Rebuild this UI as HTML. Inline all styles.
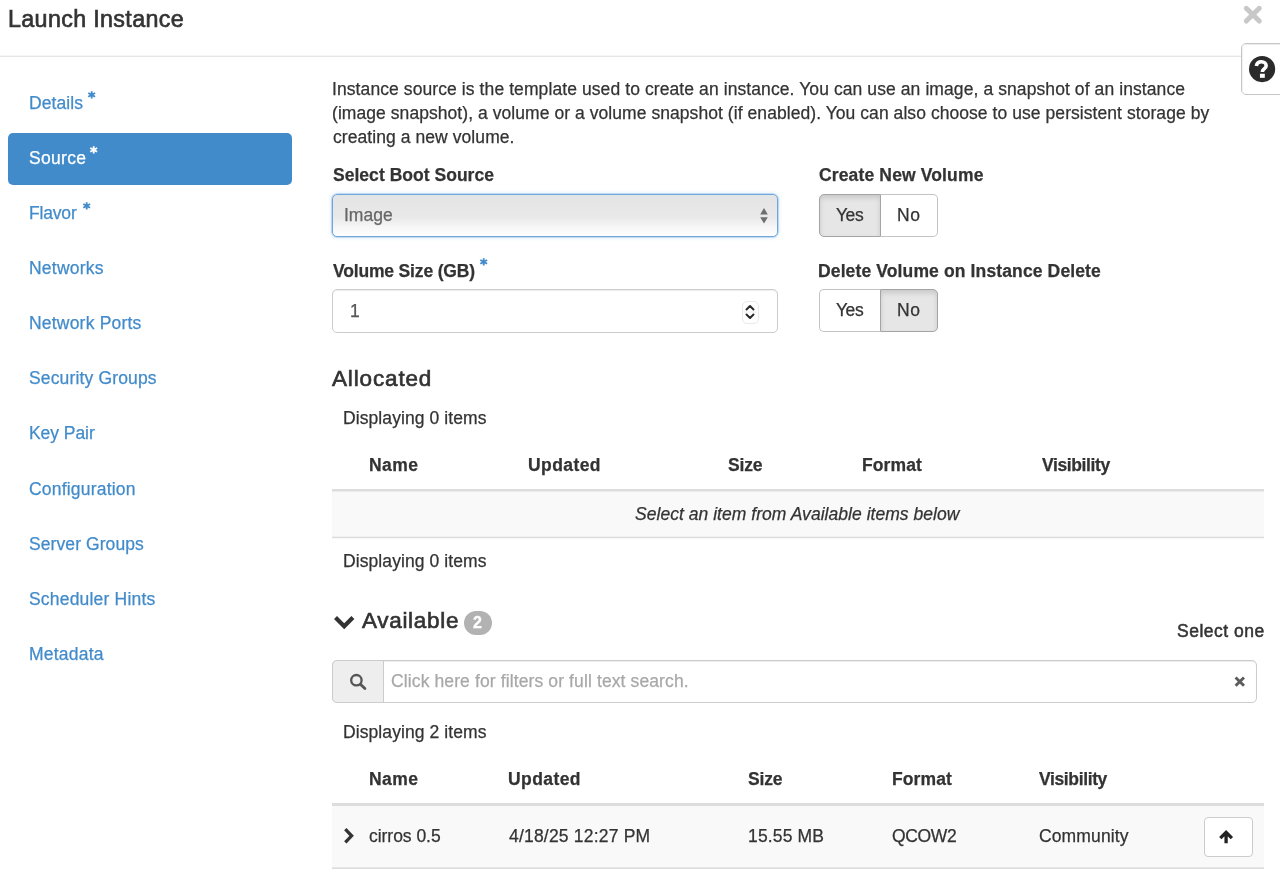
<!DOCTYPE html>
<html>
<head>
<meta charset="utf-8">
<title>Launch Instance</title>
<style>
*{box-sizing:border-box;margin:0;padding:0}
html,body{width:1280px;height:873px;overflow:hidden;background:#fff}
body{font-family:"Liberation Sans",sans-serif;font-size:17.5px;line-height:24.5px;color:#333;position:relative}
.a{position:absolute}
.t{position:absolute;white-space:nowrap;height:24.5px;line-height:24.5px}
.b{font-weight:bold}
.i{font-style:italic}
.lnk{color:#428bca}
.h{font-size:22.5px;height:30px;line-height:30px}
.h1{font-size:23.3px}
svg{display:block;position:absolute;overflow:visible}
.btn{position:absolute;border:1px solid #c3c3c3;background:#fff}
.btn.act{background:#e6e6e6;border-color:#a4a4a4;box-shadow:inset 0 3px 5px rgba(0,0,0,.125)}
.t{-webkit-text-stroke:0.25px;will-change:transform}.h{-webkit-text-stroke:0.65px}.so{-webkit-text-stroke:0.5px}

</style>
</head>
<body>
<!-- ===== modal header ===== -->
<div class="a" style="left:0;top:55px;width:1280px;height:2px;background:linear-gradient(#f5f5f5 50%,#e6e6e6 50%)"></div>
<svg style="left:1244.3px;top:6.2px" width="17.6" height="17.4" viewBox="0 0 17.6 17.4"><path d="M2.3 2.3L15.3 15.1M15.3 2.3L2.3 15.1" stroke="#c8c8c8" stroke-width="5" stroke-linecap="round" fill="none"/></svg>

<!-- help button -->
<div class="a" style="left:1241px;top:43px;width:60px;height:52px;background:#fff;border:1px solid #c6c6c6;border-radius:5px"></div>
<div class="a" style="left:1242px;top:44px;width:58px;height:50px;border-top:1px solid #ececec;border-left:1px solid #f1f1f1;border-radius:4px"></div>
<svg style="left:1249px;top:55.8px" width="26.2" height="26.2" viewBox="0 0 27 27"><circle cx="13.5" cy="13.5" r="13.5" fill="#2b2b2b"/><path d="M7.6 10.2C8 7.4 10 5.9 12.8 5.9C15.6 5.9 17.7 7.6 17.7 10C17.7 12.9 14.1 13.4 13.9 15.6L13.9 16.6" stroke="#fff" stroke-width="3.7" fill="none"/><rect x="11.3" y="18.3" width="5" height="4.2" fill="#fff"/></svg>

<!-- ===== sidebar ===== -->
<div class="a" style="left:8px;top:133px;width:283.5px;height:51.5px;background:#428bca;border-radius:5px"></div>
<svg style="left:88.0px;top:91.2px" width="7.4" height="7.8" viewBox="0 0 8 9" preserveAspectRatio="none"><path d="M4 0.2V8.8M0.3 2.3L7.7 6.7M7.7 2.3L0.3 6.7" stroke="#428bca" stroke-width="2" fill="none"/></svg>
<svg style="left:90.2px;top:146.2px" width="7.4" height="7.8" viewBox="0 0 8 9" preserveAspectRatio="none"><path d="M4 0.2V8.8M0.3 2.3L7.7 6.7M7.7 2.3L0.3 6.7" stroke="#fff" stroke-width="2" fill="none"/></svg>
<svg style="left:82.7px;top:202.4px" width="7.4" height="7.8" viewBox="0 0 8 9" preserveAspectRatio="none"><path d="M4 0.2V8.8M0.3 2.3L7.7 6.7M7.7 2.3L0.3 6.7" stroke="#428bca" stroke-width="2" fill="none"/></svg>

<!-- ===== form row 1 ===== -->
<div class="a" style="left:332px;top:194px;width:446px;height:43px;border:1px solid #6fa6dc;border-radius:5px;background:linear-gradient(#e2e4e6,#e5e5e5 12%,#e9e9e9 55%,#f6f6f6 78%,#fefefe);box-shadow:0 0 0 0.6px rgba(111,166,220,.55),0 0 4px rgba(102,175,233,.4)"></div>
<svg style="left:760.4px;top:208px" width="8" height="16" viewBox="0 0 8 16"><path d="M4 0L7.8 6.4H0.2Z M4 15.6L0.2 9.2H7.8Z" fill="#6e6e6e"/></svg>
<div class="btn act" style="left:819px;top:194px;width:62px;height:42.5px;border-radius:5px 0 0 5px"></div>
<div class="btn" style="left:881px;top:194px;width:57px;height:42.5px;border-radius:0 5px 5px 0;border-left:0"></div>

<!-- ===== form row 2 ===== -->
<svg style="left:480.4px;top:258.0px" width="7.4" height="7.8" viewBox="0 0 8 9" preserveAspectRatio="none"><path d="M4 0.2V8.8M0.3 2.3L7.7 6.7M7.7 2.3L0.3 6.7" stroke="#428bca" stroke-width="2" fill="none"/></svg>
<div class="a" style="left:332px;top:289px;width:446px;height:44px;border:1px solid #ccc;border-radius:5px;background:#fff;box-shadow:inset 0 1px 1px rgba(0,0,0,.075)"></div>
<div class="a" style="left:742px;top:300.5px;width:16.5px;height:23px;border:1px solid #e9e9e9;border-radius:5px;background:#fff"></div>
<svg style="left:745.3px;top:304px" width="10" height="16" viewBox="0 0 10 16"><path d="M1.5 5.5L5 2L8.5 5.5M1.5 10.5L5 14L8.5 10.5" stroke="#2a2a2a" stroke-width="2" fill="none" stroke-linecap="round" stroke-linejoin="round"/><path d="M-2 8H12" stroke="#ededed" stroke-width="1"/></svg>
<div class="btn" style="left:819px;top:289px;width:61px;height:43px;border-radius:5px 0 0 5px;border-right:0"></div>
<div class="btn act" style="left:880px;top:289px;width:58px;height:43px;border-radius:0 5px 5px 0"></div>

<!-- ===== Allocated table ===== -->
<div class="a" style="left:332px;top:489px;width:932px;height:3px;background:linear-gradient(#ddd 66.6%,#ececec 66.6%)"></div>
<div class="a" style="left:332px;top:492px;width:932px;height:45px;background:#f9f9f9"></div>
<div class="a" style="left:332px;top:536px;width:932px;height:3px;background:linear-gradient(#f0f0f0 33.3%,#ddd 33.3%,#ddd 66.6%,#f7f7f7 66.6%)"></div>

<!-- ===== Available ===== -->
<svg style="left:333.6px;top:616.3px" width="20.4" height="13.2" viewBox="0 0 20.4 13.2"><path d="M0 3L3 0L10.2 7.2L17.4 0L20.4 3L10.2 13.2Z" fill="#333"/></svg>
<div class="a" style="left:464.3px;top:611.1px;width:27.7px;height:24px;border-radius:12px;background:#b2b2b2"></div>
<div class="t b" style="left:473.2px;top:610.9px;color:#fff;font-size:16px;-webkit-text-stroke:0.3px">2</div>

<!-- search bar -->
<div class="a" style="left:332px;top:659.5px;width:924.5px;height:43px;border:1px solid #ccc;border-radius:5px;background:#fff;box-shadow:inset 0 1px 1px rgba(0,0,0,.075)"></div>
<div class="a" style="left:332px;top:659.5px;width:52px;height:43px;border:1px solid #ccc;border-radius:5px 0 0 5px;background:#eee"></div>
<svg style="left:350px;top:674px" width="16" height="16" viewBox="0 0 16 16"><circle cx="6.4" cy="6.2" r="5.2" stroke="#555" stroke-width="2.3" fill="none"/><path d="M10.4 10.2L14.9 14.6" stroke="#555" stroke-width="2.8" stroke-linecap="round"/></svg>
<svg style="left:1234.1px;top:676.3px" width="11.6" height="11.2" viewBox="0 0 12 12"><path d="M1.5 1.5L10.5 10.5M10.5 1.5L1.5 10.5" stroke="#5c5c5c" stroke-width="3.1" fill="none"/></svg>

<!-- ===== Available table ===== -->
<div class="a" style="left:332px;top:803px;width:932px;height:3px;background:#ddd"></div>
<div class="a" style="left:332px;top:806px;width:932px;height:62px;background:#f9f9f9"></div>
<div class="a" style="left:332px;top:867px;width:932px;height:2px;background:linear-gradient(#e6e6e6 50%,#ddd 50%)"></div>
<svg style="left:342.9px;top:827.8px" width="10.6" height="15.6" viewBox="0 0 10.6 15.6"><path d="M2.3 1.2L8.6 7.8L2.3 14.4" stroke="#333" stroke-width="3.3" fill="none"/></svg>
<div class="a" style="left:1204.25px;top:817px;width:48.75px;height:40px;border:1px solid #ccc;border-radius:4px;background:#fff"></div>
<svg style="left:1219px;top:830.4px" width="14.2" height="13.2" viewBox="0 0 14.2 13.2"><path d="M7.1 13.2V3.2M1.3 8.2L7.1 2.4L12.9 8.2" stroke="#222" stroke-width="3.3" fill="none"/></svg>

<!-- ===== text ===== -->
<div class="t h h1" style="left:8.30px;top:4.12px;letter-spacing:0.336px;">Launch Instance</div>
<div class="t lnk" style="left:28.50px;top:90.88px;letter-spacing:0.083px;">Details</div>
<div class="t" style="left:28.50px;top:145.98px;letter-spacing:0.300px;color:#fff">Source</div>
<div class="t lnk" style="left:29.20px;top:201.08px;letter-spacing:-0.180px;">Flavor</div>
<div class="t lnk" style="left:29.20px;top:256.18px;letter-spacing:0.229px;">Networks</div>
<div class="t lnk" style="left:29.20px;top:311.28px;letter-spacing:0.200px;">Network Ports</div>
<div class="t lnk" style="left:28.60px;top:366.38px;letter-spacing:0.150px;">Security Groups</div>
<div class="t lnk" style="left:29.20px;top:421.48px;letter-spacing:-0.057px;">Key Pair</div>
<div class="t lnk" style="left:29.30px;top:476.58px;letter-spacing:0.200px;">Configuration</div>
<div class="t lnk" style="left:28.60px;top:531.68px;letter-spacing:0.083px;">Server Groups</div>
<div class="t lnk" style="left:28.60px;top:586.78px;letter-spacing:0.193px;">Scheduler Hints</div>
<div class="t lnk" style="left:29.20px;top:641.88px;letter-spacing:0.229px;">Metadata</div>
<div class="t" style="left:332.00px;top:76.78px;letter-spacing:0.090px;">Instance source is the template used to create an instance. You can use an image, a snapshot of an instance</div>
<div class="t" style="left:331.50px;top:100.88px;letter-spacing:0.060px;">(image snapshot), a volume or a volume snapshot (if enabled). You can also choose to use persistent storage by</div>
<div class="t" style="left:332.50px;top:125.08px;letter-spacing:0.071px;">creating a new volume.</div>
<div class="t b" style="left:332.50px;top:163.08px;letter-spacing:0.029px;">Select Boot Source</div>
<div class="t b" style="left:818.70px;top:163.08px;letter-spacing:0.144px;">Create New Volume</div>
<div class="t b" style="left:332.50px;top:258.78px;letter-spacing:-0.167px;">Volume Size (GB)</div>
<div class="t b" style="left:818.00px;top:258.78px;letter-spacing:0.129px;">Delete Volume on Instance Delete</div>
<div class="t" style="left:344.30px;top:203.08px;color:#666">Image</div>
<div class="t" style="left:349.50px;top:298.68px;color:#555">1</div>
<div class="t" style="left:835.60px;top:202.98px;letter-spacing:-0.450px;">Yes</div>
<div class="t" style="left:897.00px;top:202.98px;letter-spacing:0.500px;">No</div>
<div class="t" style="left:835.60px;top:297.98px;letter-spacing:-0.450px;">Yes</div>
<div class="t" style="left:897.00px;top:297.98px;letter-spacing:0.500px;">No</div>
<div class="t h" style="left:332.30px;top:364.30px;letter-spacing:0.850px;">Allocated</div>
<div class="t" style="left:342.50px;top:405.78px;letter-spacing:0.088px;">Displaying 0 items</div>
<div class="t b" style="left:369.30px;top:452.78px;letter-spacing:0.467px;">Name</div>
<div class="t b" style="left:528.00px;top:452.78px;letter-spacing:0.417px;">Updated</div>
<div class="t b" style="left:728.00px;top:452.78px;letter-spacing:-0.167px;">Size</div>
<div class="t b" style="left:861.50px;top:452.78px;letter-spacing:0.100px;">Format</div>
<div class="t b" style="left:1041.50px;top:452.78px;letter-spacing:-0.389px;">Visibility</div>
<div class="t i" style="left:635.00px;top:501.78px;letter-spacing:0.037px;">Select an item from Available items below</div>
<div class="t" style="left:342.50px;top:548.78px;letter-spacing:0.088px;">Displaying 0 items</div>
<div class="t h" style="left:361.50px;top:606.30px;letter-spacing:0.688px;">Available</div>
<div class="t so" style="left:1177.00px;top:619.08px;letter-spacing:0.500px;">Select one</div>
<div class="t" style="left:390.60px;top:669.08px;letter-spacing:0.117px;color:#a8a8a8">Click here for filters or full text search.</div>
<div class="t" style="left:342.50px;top:719.78px;letter-spacing:0.088px;">Displaying 2 items</div>
<div class="t b" style="left:369.30px;top:767.48px;letter-spacing:0.467px;">Name</div>
<div class="t b" style="left:508.00px;top:767.48px;letter-spacing:0.417px;">Updated</div>
<div class="t b" style="left:748.00px;top:767.48px;letter-spacing:-0.167px;">Size</div>
<div class="t b" style="left:891.50px;top:767.48px;letter-spacing:0.100px;">Format</div>
<div class="t b" style="left:1038.90px;top:767.48px;letter-spacing:-0.367px;">Visibility</div>
<div class="t" style="left:369.40px;top:824.38px;letter-spacing:-0.033px;">cirros 0.5</div>
<div class="t" style="left:509.00px;top:824.38px;letter-spacing:0.200px;">4/18/25 12:27 PM</div>
<div class="t" style="left:748.00px;top:824.38px;letter-spacing:0.143px;">15.55 MB</div>
<div class="t" style="left:892.00px;top:824.38px;letter-spacing:-0.375px;">QCOW2</div>
<div class="t" style="left:1039.00px;top:824.38px;letter-spacing:0.125px;">Community</div>
</body>
</html>
